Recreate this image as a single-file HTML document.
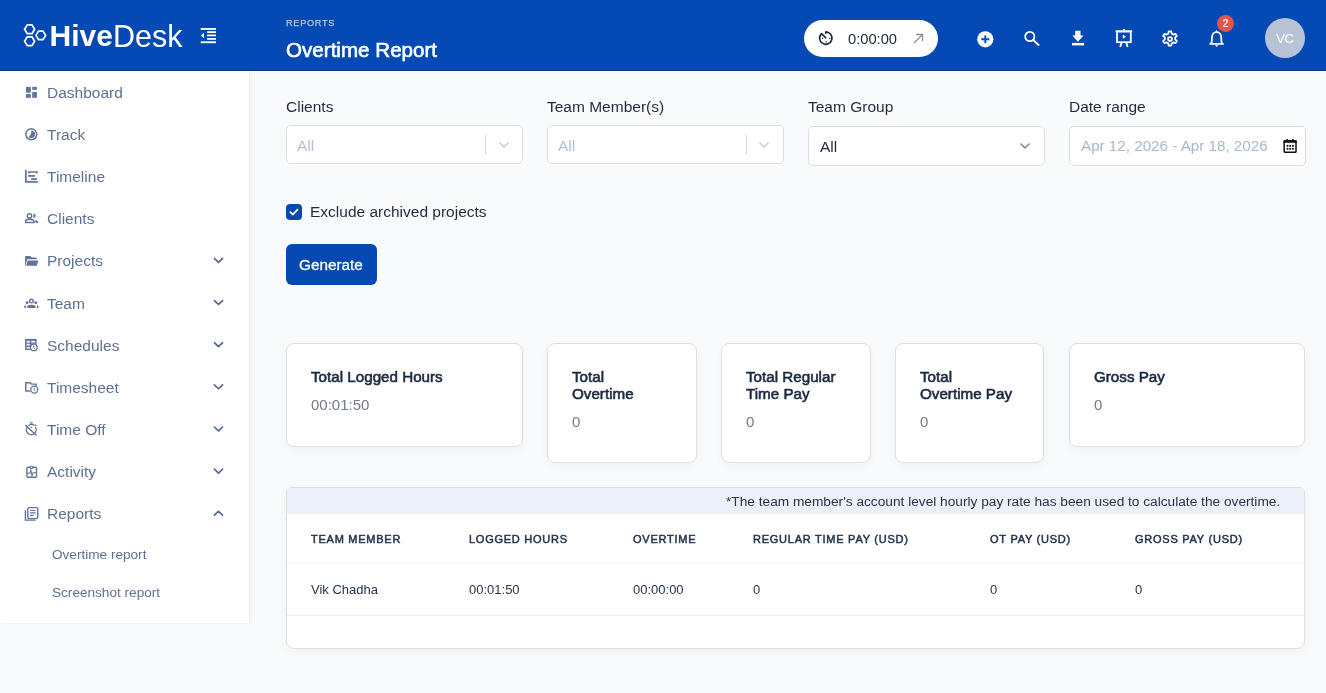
<!DOCTYPE html>
<html><head><meta charset="utf-8">
<style>
*{box-sizing:border-box;margin:0;padding:0}
html,body{width:1326px;height:693px;overflow:hidden;background:#F9FAFB;font-family:"Liberation Sans",sans-serif;}
.a{position:absolute;white-space:nowrap;line-height:1}
#hdr{position:absolute;left:0;top:0;width:1326px;height:71px;background:#054AB4;box-shadow:inset 0 -1px 0 rgba(0,20,70,0.35);z-index:2}
#side{position:absolute;left:0;top:71px;width:250px;height:552px;background:#fff;border-right:1px solid #E9EBEE;box-shadow:1px 1px 4px rgba(30,40,60,0.04)}
.nt{position:absolute;left:47px;font-size:15.5px;color:#5F7192;white-space:nowrap;line-height:1}
.ni{position:absolute;left:24px;width:14px;height:14px}
.nc{position:absolute;left:213px;width:11px;height:7px}
.sub{position:absolute;left:52px;color:#5F7192;font-size:13.6px;white-space:nowrap;line-height:1}
.lbl{position:absolute;font-size:15.5px;color:#1F2B3D;white-space:nowrap;line-height:1}
.inp{position:absolute;top:125.5px;height:40px;width:237px;background:#fff;border:1px solid #D9DFE8;border-radius:5px;}
.card{position:absolute;top:343px;background:#fff;border:1px solid #DCDEE1;border-radius:8px;box-shadow:0 3px 8px rgba(40,50,70,0.04)}
.ch{position:absolute;left:24px;font-size:15.2px;color:#1B2A42;-webkit-text-stroke:0.6px #1B2A42;line-height:17px;white-space:nowrap}
.cv{position:absolute;left:24px;font-size:15px;color:#737B87;line-height:1}
.th{position:absolute;font-size:11px;letter-spacing:0.75px;color:#26344B;-webkit-text-stroke:0.5px #26344B;white-space:nowrap;line-height:1}
.td{position:absolute;font-size:13px;color:#26344B;white-space:nowrap;line-height:1}
</style></head><body>
<div id="root" style="position:absolute;left:0;top:0;width:1326px;height:693px;will-change:transform">
<div id="hdr">
  <!-- logo -->
  <svg class="a" style="left:20px;top:20px" width="30" height="30" viewBox="20 20 30 30">
    <g fill="none" stroke="#fff" stroke-width="1.7" stroke-linejoin="round">
      <polygon points="24.6,29.3 27.3,24.9 32.0,24.9 34.6,29.3 32.0,33.7 27.3,33.7"/>
      <polygon points="24.6,41.2 27.3,36.8 32.0,36.8 34.6,41.2 32.0,45.6 27.3,45.6"/>
      <polygon points="36.0,35.35 38.5,31.1 43.1,31.1 45.6,35.35 43.1,39.6 38.5,39.6"/>
    </g>
  </svg>
  <div class="a" style="left:49.5px;top:21px;font-size:30px;font-weight:bold;color:#fff">Hive</div>
  <div class="a" style="left:113px;top:21px;font-size:30.5px;color:#fff;-webkit-text-stroke:0.7px #054AB4;paint-order:stroke fill">Desk</div>
  <!-- collapse icon -->
  <svg class="a" style="left:195px;top:24px" width="28" height="24" viewBox="195 24 28 24">
    <g fill="#fff">
      <rect x="200.7" y="28" width="15.3" height="1.9"/>
      <rect x="207.1" y="31.2" width="8.9" height="1.8"/>
      <rect x="207.1" y="34.5" width="8.9" height="1.8"/>
      <rect x="207.1" y="38" width="8.9" height="1.8"/>
      <rect x="200.7" y="41.3" width="15.3" height="1.9"/>
      <polygon points="200.9,35.45 204,32.7 204,38.2"/>
    </g>
  </svg>
  <div class="a" style="left:286px;top:18.5px;font-size:9.2px;letter-spacing:0.7px;color:#AFC6EE;-webkit-text-stroke:0.25px #AFC6EE">REPORTS</div>
  <div class="a" style="left:286px;top:39.5px;font-size:20.6px;color:#fff;-webkit-text-stroke:0.6px #fff">Overtime Report</div>
  <!-- timer pill -->
  <div class="a" style="left:804px;top:20px;width:134px;height:37px;border-radius:19px;background:#fff"></div>
  <svg class="a" style="left:814px;top:26px" width="24" height="24" viewBox="814 26 24 24">
    <g fill="none" stroke="#1C2434" stroke-width="1.6" stroke-linejoin="round">
      <path d="M825.7 31.9 A6.2 6.2 0 1 1 821.5 33.6 L826.2 38.3"/>
      <path d="M825.7 31.3 V33.9" stroke-linecap="butt"/>
    </g>
    <g fill="#1C2434"><rect x="821.9" y="37.8" width="1.3" height="1.1"/><rect x="829.1" y="37.8" width="1.3" height="1.1"/><rect x="825.5" y="41.3" width="1.4" height="1.1"/></g>
  </svg>
  <div class="a" style="left:848px;top:32px;font-size:14.7px;color:#222B3A">0:00:00</div>
  <svg class="a" style="left:912px;top:33px" width="12" height="11" viewBox="0 0 12 11">
    <g fill="none" stroke="#8A8F99" stroke-width="1.3"><path d="M2 10 L10.5 1.5"/><path d="M4 1.5 H10.5 V8"/></g>
  </svg>
  <!-- plus circle -->
  <svg class="a" style="left:977px;top:30.5px" width="17" height="17" viewBox="0 0 17 17">
    <circle cx="8.3" cy="8.3" r="8.1" fill="#fff"/>
    <path d="M4.3 8.3 H12.2 M8.3 4.4 V12.2" stroke="#054AB4" stroke-width="1.9"/>
  </svg>
  <!-- search -->
  <svg class="a" style="left:1022px;top:29px" width="19" height="19" viewBox="0 0 19 19">
    <g fill="none" stroke="#fff" stroke-width="1.8"><circle cx="7.8" cy="7.5" r="4.6"/><path d="M11.2 11 L16.6 16" stroke-linecap="round"/></g>
  </svg>
  <!-- download -->
  <svg class="a" style="left:1071px;top:30px" width="14" height="16" viewBox="0 0 14 16">
    <g fill="#fff"><path d="M4.2 0.8 H9.5 V5.6 H12.6 L6.85 11.8 L1.3 5.6 H4.2 Z"/><rect x="1" y="12.9" width="12.1" height="2.5"/></g>
  </svg>
  <!-- presentation -->
  <svg class="a" style="left:1114px;top:28px" width="20" height="20" viewBox="0 0 20 20">
    <g fill="none" stroke="#fff" stroke-width="1.8">
      <path d="M1.6 3.4 H18.2"/>
      <rect x="3" y="3.4" width="13.8" height="10.8"/>
      <path d="M9.9 1 V3.4"/>
      <path d="M7.6 14.2 L6.2 19 M12.2 14.2 L13.6 19"/>
    </g>
    <polygon points="8.8,6.6 12,8.7 8.8,10.8" fill="#fff"/>
  </svg>
  <!-- gear -->
  <svg class="a" style="left:1161px;top:29.5px" width="18" height="18" viewBox="0 0 24 24">
    <path fill="none" stroke="#fff" stroke-width="2.3" stroke-linejoin="round" d="M10.3 1.8 h3.4 l0.6 3 a7.6 7.6 0 0 1 2.2 1.3 l2.9 -1 l1.7 2.9 l-2.3 2 a7.6 7.6 0 0 1 0 2.6 l2.3 2 l-1.7 2.9 l-2.9 -1 a7.6 7.6 0 0 1 -2.2 1.3 l-0.6 3 h-3.4 l-0.6 -3 a7.6 7.6 0 0 1 -2.2 -1.3 l-2.9 1 l-1.7 -2.9 l2.3 -2 a7.6 7.6 0 0 1 0 -2.6 l-2.3 -2 l1.7 -2.9 l2.9 1 a7.6 7.6 0 0 1 2.2 -1.3 z"/>
    <circle cx="12" cy="12" r="2.6" fill="none" stroke="#fff" stroke-width="2.3"/>
  </svg>
  <!-- bell -->
  <svg class="a" style="left:1206px;top:28px" width="20" height="21" viewBox="1206 28 20 21">
    <g fill="none" stroke="#fff" stroke-width="1.8" stroke-linejoin="round" stroke-linecap="round">
      <path d="M1211.4 43.4 C1211.9 41.5 1212 39.5 1212 37.3 C1212 34.2 1214 32.1 1216.6 32.1 C1219.2 32.1 1221.2 34.2 1221.2 37.3 C1221.2 39.5 1221.3 41.5 1221.8 43.4"/>
      <path d="M1210.2 43.9 H1223"/>
    </g>
    <path d="M1216.6 30 L1218 32.3 H1215.2 Z" fill="#fff"/>
    <path d="M1215.1 45 H1218.1 L1216.6 46.9 Z" fill="#fff"/>
  </svg>
  <div class="a" style="left:1217px;top:15px;width:17px;height:17px;border-radius:50%;background:#E5544C"></div>
  <div class="a" style="left:1217px;top:19px;width:17px;text-align:center;font-size:10px;color:#fff;-webkit-text-stroke:0.2px #fff">2</div>
  <!-- avatar -->
  <div class="a" style="left:1265px;top:18px;width:40px;height:40px;border-radius:50%;background:#B8C3D8"></div>
  <div class="a" style="left:1265px;top:32.3px;width:40px;text-align:center;font-size:13.5px;letter-spacing:-0.8px;text-indent:-0.8px;color:#fff">VC</div>
</div>

<div id="side">
</div>
<div class="nt" style="top:84.80px">Dashboard</div>
<div class="nt" style="top:126.95px">Track</div>
<div class="nt" style="top:169.10px">Timeline</div>
<div class="nt" style="top:211.25px">Clients</div>
<div class="nt" style="top:253.40px">Projects</div>
<div class="nt" style="top:295.55px">Team</div>
<div class="nt" style="top:337.70px">Schedules</div>
<div class="nt" style="top:379.85px">Timesheet</div>
<div class="nt" style="top:422.00px">Time Off</div>
<div class="nt" style="top:464.15px">Activity</div>
<div class="nt" style="top:506.30px">Reports</div>
<svg class="a" style="left:0;top:0" width="250" height="693" viewBox="0 0 250 693">
<path d="M214.4 258.40 L218.5 262.30 L222.6 258.40" fill="none" stroke="#53648A" stroke-width="1.6" stroke-linecap="round" stroke-linejoin="round"/>
<path d="M214.4 300.55 L218.5 304.45 L222.6 300.55" fill="none" stroke="#53648A" stroke-width="1.6" stroke-linecap="round" stroke-linejoin="round"/>
<path d="M214.4 342.70 L218.5 346.60 L222.6 342.70" fill="none" stroke="#53648A" stroke-width="1.6" stroke-linecap="round" stroke-linejoin="round"/>
<path d="M214.4 384.85 L218.5 388.75 L222.6 384.85" fill="none" stroke="#53648A" stroke-width="1.6" stroke-linecap="round" stroke-linejoin="round"/>
<path d="M214.4 427.00 L218.5 430.90 L222.6 427.00" fill="none" stroke="#53648A" stroke-width="1.6" stroke-linecap="round" stroke-linejoin="round"/>
<path d="M214.4 469.15 L218.5 473.05 L222.6 469.15" fill="none" stroke="#53648A" stroke-width="1.6" stroke-linecap="round" stroke-linejoin="round"/>
<path d="M214.4 515.20 L218.5 511.30 L222.6 515.20" fill="none" stroke="#53648A" stroke-width="1.6" stroke-linecap="round" stroke-linejoin="round"/>
</svg>
<svg class="a" style="left:0;top:0" width="250" height="693" viewBox="0 0 250 693">
<g fill="#62749A">
  <rect x="26" y="86.9" width="4.8" height="5.8"/><rect x="26" y="94.1" width="4.8" height="3.7"/>
  <rect x="32.2" y="86.9" width="4.7" height="2.9"/><rect x="32.2" y="92.05" width="4.7" height="5.75"/>
</g>
<g fill="none" stroke="#62749A" stroke-width="1.5">
  <circle cx="31.3" cy="134.3" r="5.45"/>
</g>
<path fill="#62749A" d="M31.3 130.4 A3.9 3.9 0 1 1 28.6 137.1 L31 134 Z"/>
<g fill="none" stroke="#62749A">
  <path d="M25.85 170 V181.8 H37.8" stroke-width="1.8"/>
  <path d="M28.9 173.6 V172 H37 V173.6" stroke-width="1.6"/>
</g>
<g fill="#62749A"><rect x="28.1" y="175" width="6.8" height="1.8"/><rect x="31.1" y="178.2" width="5.9" height="1.8"/></g>
<g fill="none" stroke="#62749A" stroke-width="1.5">
  <circle cx="29.5" cy="215.9" r="2.2"/>
  <path d="M25.6 222.4 V221.6 C25.6 220 27.5 219.3 29.8 219.3 C32.1 219.3 34 220 34 221.6 V222.4 Z"/>
</g>
<g fill="#62749A">
  <path d="M33.5 213.6 A2.25 2.25 0 0 1 33.5 218.1 Z"/>
  <path d="M35.4 219.7 C36.9 220.1 38 221 38 222.3 V223.1 H35.6 Z"/>
</g>
<g fill="#62749A">
  <path d="M25.1 265.7 V256.8 Q25.1 256 25.9 256 H30.4 L31.8 257.4 H35.9 Q36.7 257.4 36.7 258.2 V259.3 H27.1 L25.6 265.7 Z"/>
  <path d="M27.6 260.4 H38.4 L36.8 265.7 H26.2 Z"/>
</g>
<g fill="none" stroke="#62749A" stroke-width="1.4"><circle cx="31.4" cy="301.1" r="1.8"/></g>
<g fill="#62749A">
  <circle cx="27.1" cy="302.8" r="1.45"/><circle cx="35.7" cy="302.8" r="1.45"/>
  <path d="M27.2 308 V306.8 C27.2 305.5 29 304.8 31.4 304.8 C33.8 304.8 35.6 305.5 35.6 306.8 V308 Z"/>
  <path d="M24.2 308 V306.8 C24.2 306 24.9 305.4 25.9 305.3 V308 Z"/>
  <path d="M38.6 308 V306.8 C38.6 306 37.9 305.4 36.9 305.3 V308 Z"/>
</g>
<g fill="none" stroke="#62749A" stroke-width="1.4">
  <path d="M30.6 349.3 H25.8 V339.6 H35.8 V344"/>
  <path d="M25.8 343.1 H35.8 M25.8 346.3 H30.2 M30.5 339.6 V346.3"/>
</g>
<rect x="25.1" y="338.9" width="11.4" height="1.9" fill="#62749A"/>
<circle cx="33.8" cy="347.4" r="3.3" fill="#fff" stroke="#62749A" stroke-width="1.3"/>
<path d="M33.7 345.6 V347.6 L35 348.7" fill="none" stroke="#62749A" stroke-width="1"/>
<g fill="none" stroke="#62749A" stroke-width="1.4">
  <path d="M30.4 391 H25.8 V382.7 H30.2 L31.5 384.1 H36.1 V386"/>
</g>
<circle cx="34.3" cy="389.6" r="3.5" fill="#fff" stroke="#62749A" stroke-width="1.3"/>
<path d="M34.2 387.8 V389.8 L35.5 390.9" fill="none" stroke="#62749A" stroke-width="1"/>
<g fill="none" stroke="#62749A" stroke-width="1.4">
  <path d="M27.6 426.5 A4.9 4.9 0 1 0 35.4 427.2"/>
  <path d="M28.6 425.6 A4.9 4.9 0 0 1 34.4 425.3"/>
  <path d="M25.3 424.9 L36.6 435.4"/>
  <path d="M35.2 424.8 L36.3 425.9"/>
</g>
<rect x="29.9" y="422.2" width="2.8" height="1.3" fill="#62749A"/>
<circle cx="31.3" cy="427.3" r="0.75" fill="#62749A"/>
<g fill="none" stroke="#62749A">
  <rect x="26.9" y="467.3" width="9.6" height="9.9" rx="1" stroke-width="1.4"/>
  <path d="M27 473.3 H29.7 L30.8 470.2 L32 475.7 L33 472.8 H36.4" stroke-width="1.1"/>
</g>
<circle cx="31.5" cy="467.3" r="1.3" fill="#fff" stroke="#62749A" stroke-width="1.1"/>
<g fill="none" stroke="#62749A" stroke-width="1.4">
  <path d="M25.4 510.3 V520.1 H35.6"/>
  <rect x="27.8" y="507.6" width="10" height="11" rx="1.5"/>
</g>
<g fill="none" stroke="#62749A" stroke-width="1.2"><path d="M30 510.5 H35.7 M30 512.9 H35.7 M30 515.3 H33.6"/></g>
</svg>

<div class="sub" style="top:547.6px">Overtime report</div>
<div class="sub" style="top:586px">Screenshot report</div>


<!-- main form -->
<div class="lbl" style="left:286px;top:99px">Clients</div>
<div class="lbl" style="left:547px;top:99px">Team Member(s)</div>
<div class="lbl" style="left:808px;top:99px">Team Group</div>
<div class="lbl" style="left:1069px;top:99px">Date range</div>

<div class="inp" style="left:286px;top:125px;height:39px"></div>
<div class="a" style="left:297px;top:138px;font-size:15.5px;color:#B4C0D3">All</div>
<div class="a" style="left:485px;top:134px;width:1px;height:21px;background:#DCE1E9"></div>
<svg class="a" style="left:498px;top:141px" width="12" height="8" viewBox="0 0 12 8"><path d="M1.5 1.5 L6 6 L10.5 1.5" fill="none" stroke="#BCC6D6" stroke-width="1.3"/></svg>

<div class="inp" style="left:547px;top:125px;height:39px"></div>
<div class="a" style="left:558px;top:138px;font-size:15.5px;color:#B4C0D3">All</div>
<div class="a" style="left:746px;top:134px;width:1px;height:21px;background:#DCE1E9"></div>
<svg class="a" style="left:758px;top:141px" width="12" height="8" viewBox="0 0 12 8"><path d="M1.5 1.5 L6 6 L10.5 1.5" fill="none" stroke="#BCC6D6" stroke-width="1.3"/></svg>

<div class="inp" style="left:808px"></div>
<div class="a" style="left:820px;top:138.8px;font-size:15.5px;color:#1F2B3D">All</div>
<svg class="a" style="left:1019px;top:142px" width="12" height="8" viewBox="0 0 12 8"><path d="M1.5 1.5 L6 6 L10.5 1.5" fill="none" stroke="#6E7FA0" stroke-width="1.3"/></svg>

<div class="inp" style="left:1069px"></div>
<div class="a" style="left:1081px;top:137.5px;font-size:15.2px;color:#A9B8D0">Apr 12, 2026 - Apr 18, 2026</div>
<svg class="a" style="left:1280px;top:136px" width="20" height="20" viewBox="1280 136 20 20">
  <rect x="1284.2" y="141" width="11.8" height="11.3" rx="0.8" fill="none" stroke="#111" stroke-width="1.5"/>
  <rect x="1283.5" y="140.2" width="13.2" height="2.6" rx="0.6" fill="#111"/>
  <rect x="1286.4" y="139" width="1.6" height="2" rx="0.5" fill="#111"/><rect x="1292" y="139" width="1.6" height="2" rx="0.5" fill="#111"/>
  <g fill="#111"><rect x="1286.6" y="144.9" width="1.8" height="1.8"/><rect x="1289.3" y="144.9" width="1.8" height="1.8"/><rect x="1292" y="144.9" width="1.8" height="1.8"/>
  <rect x="1286.6" y="147.9" width="1.8" height="1.8"/><rect x="1289.3" y="147.9" width="1.8" height="1.8"/><rect x="1292" y="147.9" width="1.8" height="1.8"/></g>
</svg>

<!-- checkbox -->
<div class="a" style="left:286px;top:204px;width:16px;height:15.5px;border-radius:4px;background:#0A47B2"></div>
<svg class="a" style="left:286px;top:204px" width="16" height="16" viewBox="0 0 16 16"><path d="M4.4 8.2 L6.9 10.5 L11.5 5.6" fill="none" stroke="#fff" stroke-width="1.8" stroke-linecap="round" stroke-linejoin="round"/></svg>
<div class="a" style="left:310px;top:204px;font-size:15.5px;color:#1F2B3D">Exclude archived projects</div>

<!-- generate -->
<div class="a" style="left:286px;top:244px;width:91px;height:41px;border-radius:6px;background:#0649B3"></div>
<div class="a" style="left:299px;top:257px;font-size:15.3px;color:#fff;-webkit-text-stroke:0.3px #fff">Generate</div>

<!-- cards -->
<div class="card" style="left:286px;width:237px;height:104px">
  <div class="ch" style="top:24px">Total Logged Hours</div>
  <div class="cv" style="top:53px">00:01:50</div>
</div>
<div class="card" style="left:547px;width:150px;height:120px">
  <div class="ch" style="top:24px">Total<br>Overtime</div>
  <div class="cv" style="top:70px">0</div>
</div>
<div class="card" style="left:721px;width:150px;height:120px">
  <div class="ch" style="top:24px">Total Regular<br>Time Pay</div>
  <div class="cv" style="top:70px">0</div>
</div>
<div class="card" style="left:895px;width:149px;height:120px">
  <div class="ch" style="top:24px">Total<br>Overtime Pay</div>
  <div class="cv" style="top:70px">0</div>
</div>
<div class="card" style="left:1069px;width:236px;height:104px">
  <div class="ch" style="top:24px">Gross Pay</div>
  <div class="cv" style="top:53px">0</div>
</div>

<!-- table -->
<div class="a" style="left:286px;top:487px;width:1019px;height:162px;background:#fff;border:1px solid #DCDEE1;border-radius:6px 6px 8px 8px;overflow:hidden;box-shadow:0 3px 8px rgba(40,50,70,0.04)">
  <div class="a" style="left:0;top:0;width:1019px;height:26px;background:#ECF1F9"></div>
  <div class="a" style="left:0;top:75px;width:1019px;height:1px;background:#F1F3F5"></div>
  <div class="a" style="left:0;top:127px;width:1019px;height:1px;background:#ECEFF3"></div>
</div>
<div class="a" style="left:726px;top:495px;font-size:13.7px;color:#26344B">*The team member's account level hourly pay rate has been used to calculate the overtime.</div>
<div class="th" style="left:311px;top:534px">TEAM MEMBER</div>
<div class="th" style="left:469px;top:534px">LOGGED HOURS</div>
<div class="th" style="left:633px;top:534px">OVERTIME</div>
<div class="th" style="left:753px;top:534px">REGULAR TIME PAY (USD)</div>
<div class="th" style="left:990px;top:534px">OT PAY (USD)</div>
<div class="th" style="left:1135px;top:534px">GROSS PAY (USD)</div>
<div class="td" style="left:311px;top:583px">Vik Chadha</div>
<div class="td" style="left:469px;top:583px">00:01:50</div>
<div class="td" style="left:633px;top:583px">00:00:00</div>
<div class="td" style="left:753px;top:583px">0</div>
<div class="td" style="left:990px;top:583px">0</div>
<div class="td" style="left:1135px;top:583px">0</div>
</div>
</body></html>
